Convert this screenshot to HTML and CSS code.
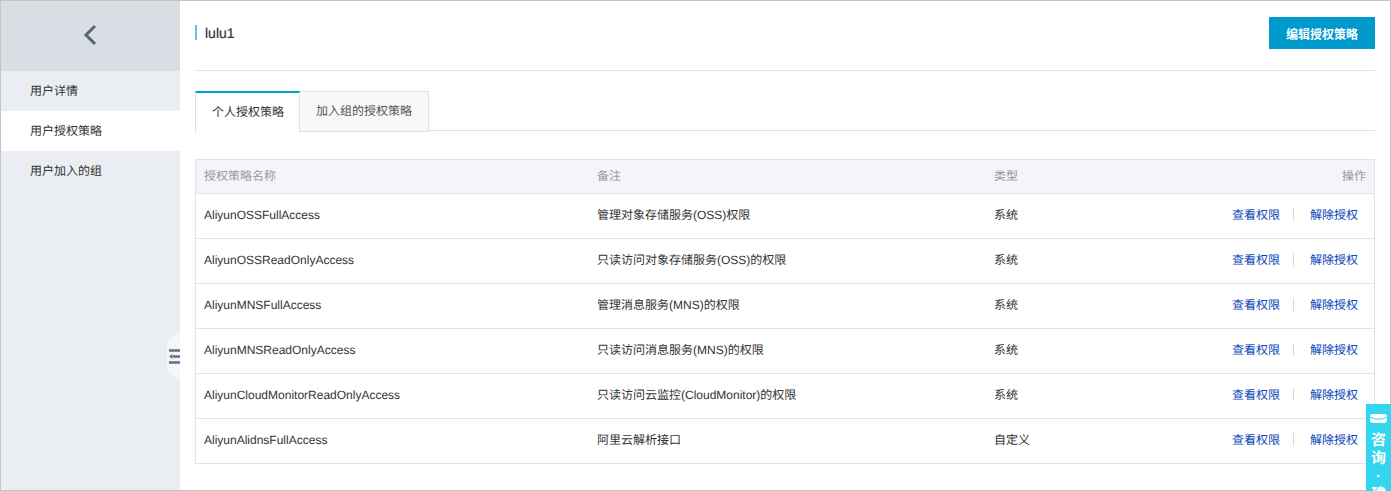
FILE: index.html
```html
<!DOCTYPE html>
<html lang="zh-CN">
<head>
  <meta charset="UTF-8">
  <meta name="viewport" content="width=device-width, initial-scale=1.0">
  <title>用户授权策略</title>
  <link rel="stylesheet" href="styles.css">
</head>
<body>

<div class="app">
  <aside class="sidebar">
    <div class="back">
      <svg width="16" height="22" viewBox="0 0 16 22"><path d="M13 2 L4 11 L13 20" fill="none" stroke="#53657f" stroke-width="3"/></svg>
    </div>
    <ul class="side-menu">
      <li>用户详情</li>
      <li class="active">用户授权策略</li>
      <li>用户加入的组</li>
    </ul>
    <div class="collapse">
      <svg width="11" height="15" viewBox="0 0 11 15">
        <path d="M0 1.5 H11 M4 7.5 H11 M0 13.5 H11" fill="none" stroke="#5f6f86" stroke-width="2.5"/>
        <path d="M0 7.5 L3.5 5 V10 Z" fill="#5f6f86"/>
      </svg>
    </div>
  </aside>

  <main class="content">
    <div class="page-head">
      <h2 class="page-title">lulu1</h2>
      <button class="edit-button">编辑授权策略</button>
    </div>

    <div class="tabs">
      <div class="tab active">个人授权策略</div>
      <div class="tab">加入组的授权策略</div>
    </div>

    <table class="policy-table">
      <thead>
        <tr>
          <th class="col-name">授权策略名称</th>
          <th class="col-note">备注</th>
          <th class="col-type">类型</th>
          <th class="col-ops">操作</th>
        </tr>
      </thead>
      <tbody>
        <tr>
          <td>AliyunOSSFullAccess</td>
          <td>管理对象存储服务(OSS)权限</td>
          <td>系统</td>
          <td class="col-ops"><a>查看权限</a><span class="sep"></span><a>解除授权</a></td>
        </tr>
        <tr>
          <td>AliyunOSSReadOnlyAccess</td>
          <td>只读访问对象存储服务(OSS)的权限</td>
          <td>系统</td>
          <td class="col-ops"><a>查看权限</a><span class="sep"></span><a>解除授权</a></td>
        </tr>
        <tr>
          <td>AliyunMNSFullAccess</td>
          <td>管理消息服务(MNS)的权限</td>
          <td>系统</td>
          <td class="col-ops"><a>查看权限</a><span class="sep"></span><a>解除授权</a></td>
        </tr>
        <tr>
          <td>AliyunMNSReadOnlyAccess</td>
          <td>只读访问消息服务(MNS)的权限</td>
          <td>系统</td>
          <td class="col-ops"><a>查看权限</a><span class="sep"></span><a>解除授权</a></td>
        </tr>
        <tr>
          <td>AliyunCloudMonitorReadOnlyAccess</td>
          <td>只读访问云监控(CloudMonitor)的权限</td>
          <td>系统</td>
          <td class="col-ops"><a>查看权限</a><span class="sep"></span><a>解除授权</a></td>
        </tr>
        <tr>
          <td>AliyunAlidnsFullAccess</td>
          <td>阿里云解析接口</td>
          <td>自定义</td>
          <td class="col-ops"><a>查看权限</a><span class="sep"></span><a>解除授权</a></td>
        </tr>
      </tbody>
    </table>
  </main>
</div>

<div class="consult">
  <svg width="17" height="9" viewBox="0 0 17 9"><path d="M0 2 Q0 0 3 0 H14 Q17 0 17 2 V6 Q17 9 14 9 H3 Q0 9 0 6 Z" fill="#fff"/><path d="M0 3 Q8.5 7.5 17 3" fill="none" stroke="#33d6ee" stroke-width="1"/></svg>
  <span>咨询·建议</span>
</div>

</body>
</html>
```

FILE: styles.css
```css
/* Page frame */
html, body {
  height: 100%;
}

body {
  margin: 0;
  overflow: hidden;
  position: relative;
  font-family: "Liberation Sans", "Noto Sans CJK SC", sans-serif;
  font-size: 12px;
  line-height: 18px;
  color: #333;
  background-color: #fff;
  text-rendering: geometricPrecision;
}

.app {
  display: flex;
  height: 491px;
  box-sizing: border-box;
  border: 1px solid #c4c4c4;
}

/* Sidebar */
.sidebar {
  position: relative;
  flex: 0 0 179px;
  background-color: #eaedf1;
}

.back {
  display: flex;
  align-items: center;
  justify-content: center;
  height: 67px;
  padding: 0 2px 3px 0;
  background-color: #d9dee4;
}

.side-menu {
  list-style: none;
  margin: 0;
  padding: 0;
}

.side-menu li {
  height: 40px;
  line-height: 41px;
  padding-left: 29px;
  color: #333;
}

.side-menu li.active {
  background-color: #fff;
}

/* Collapse handle over the sidebar edge */
.collapse {
  position: absolute;
  top: 331px;
  right: 0;
  display: flex;
  align-items: center;
  justify-content: flex-end;
  width: 13px;
  height: 48px;
  background-color: #f4f6f8;
  clip-path: polygon(0 8px, 100% 0, 100% 100%, 0 40px);
}

/* Main column */
.content {
  flex: 1;
  padding: 0 15px;
}

.page-head {
  display: flex;
  align-items: flex-start;
  justify-content: space-between;
  height: 69px;
  border-bottom: 1px solid #dfe1e5;
}

.page-title {
  margin: 24px 0 0;
  padding-left: 8px;
  height: 15px;
  line-height: 17px;
  font-size: 14px;
  font-weight: normal;
  color: #333;
  border-left: 2px solid #7db8e4;
  -webkit-text-stroke: 0.2px #333;
}

.edit-button {
  margin-top: 16px;
  width: 106px;
  height: 32px;
  padding: 0;
  border: none;
  background-color: #0099cc;
  color: #fff;
  font-family: inherit;
  font-size: 12px;
  font-weight: bold;
}

/* Tabs */
.tabs {
  display: flex;
  height: 39px;
  margin-top: 20px;
  border-bottom: 1px solid #dfe1e5;
}

.tab {
  height: 39px;
  line-height: 39px;
  padding: 0 16px;
  border: 1px solid #dfe1e5;
  border-left: none;
  background-color: #f9f8f7;
  color: #555;
}

.tab.active {
  width: 72px;
  padding-right: 15px;
  border-top: 2px solid #00a2ca;
  border-left: 1px solid #dfe1e5;
  border-bottom: none;
  background-color: #fff;
  color: #333;
  line-height: 38px;
}

/* Table */
.policy-table {
  width: 100%;
  margin-top: 28px;
  border-collapse: collapse;
  table-layout: fixed;
  border: 1px solid #e1e4e9;
}

.policy-table th {
  height: 32px;
  padding: 0 8px 1px;
  text-align: left;
  font-weight: normal;
  color: #999;
  background-color: #f4f5f9;
  border-bottom: 1px solid #e1e4e9;
}

.policy-table td {
  height: 41px;
  padding: 0 8px 3px;
  border-bottom: 1px solid #e1e4e9;
}

.col-name {
  width: 377px;
}

.col-note {
  width: 381px;
}

.col-type {
  width: 120px;
}

.policy-table .col-ops {
  text-align: right;
  padding-right: 8px;
}

.policy-table td.col-ops {
  padding-right: 16px;
}

.col-ops a {
  color: #0c46b8;
}

.sep {
  display: inline-block;
  width: 1px;
  height: 13px;
  margin: 0 16px 0 13px;
  vertical-align: -2px;
  background-color: #dcd9d4;
}

/* Floating consult tab, cut off by the window */
.consult {
  position: absolute;
  top: 404px;
  left: 1366px;
  width: 25px;
  height: 87px;
  overflow: hidden;
  padding-top: 10px;
  box-sizing: border-box;
  background-color: #33d6ee;
  color: #fff;
  font-size: 15px;
  font-weight: bold;
  text-align: center;
}

.consult svg {
  display: block;
  margin: 0 auto 9px;
}

.consult span {
  display: block;
  width: 15px;
  margin: 0 auto;
  line-height: 18px;
}
```
